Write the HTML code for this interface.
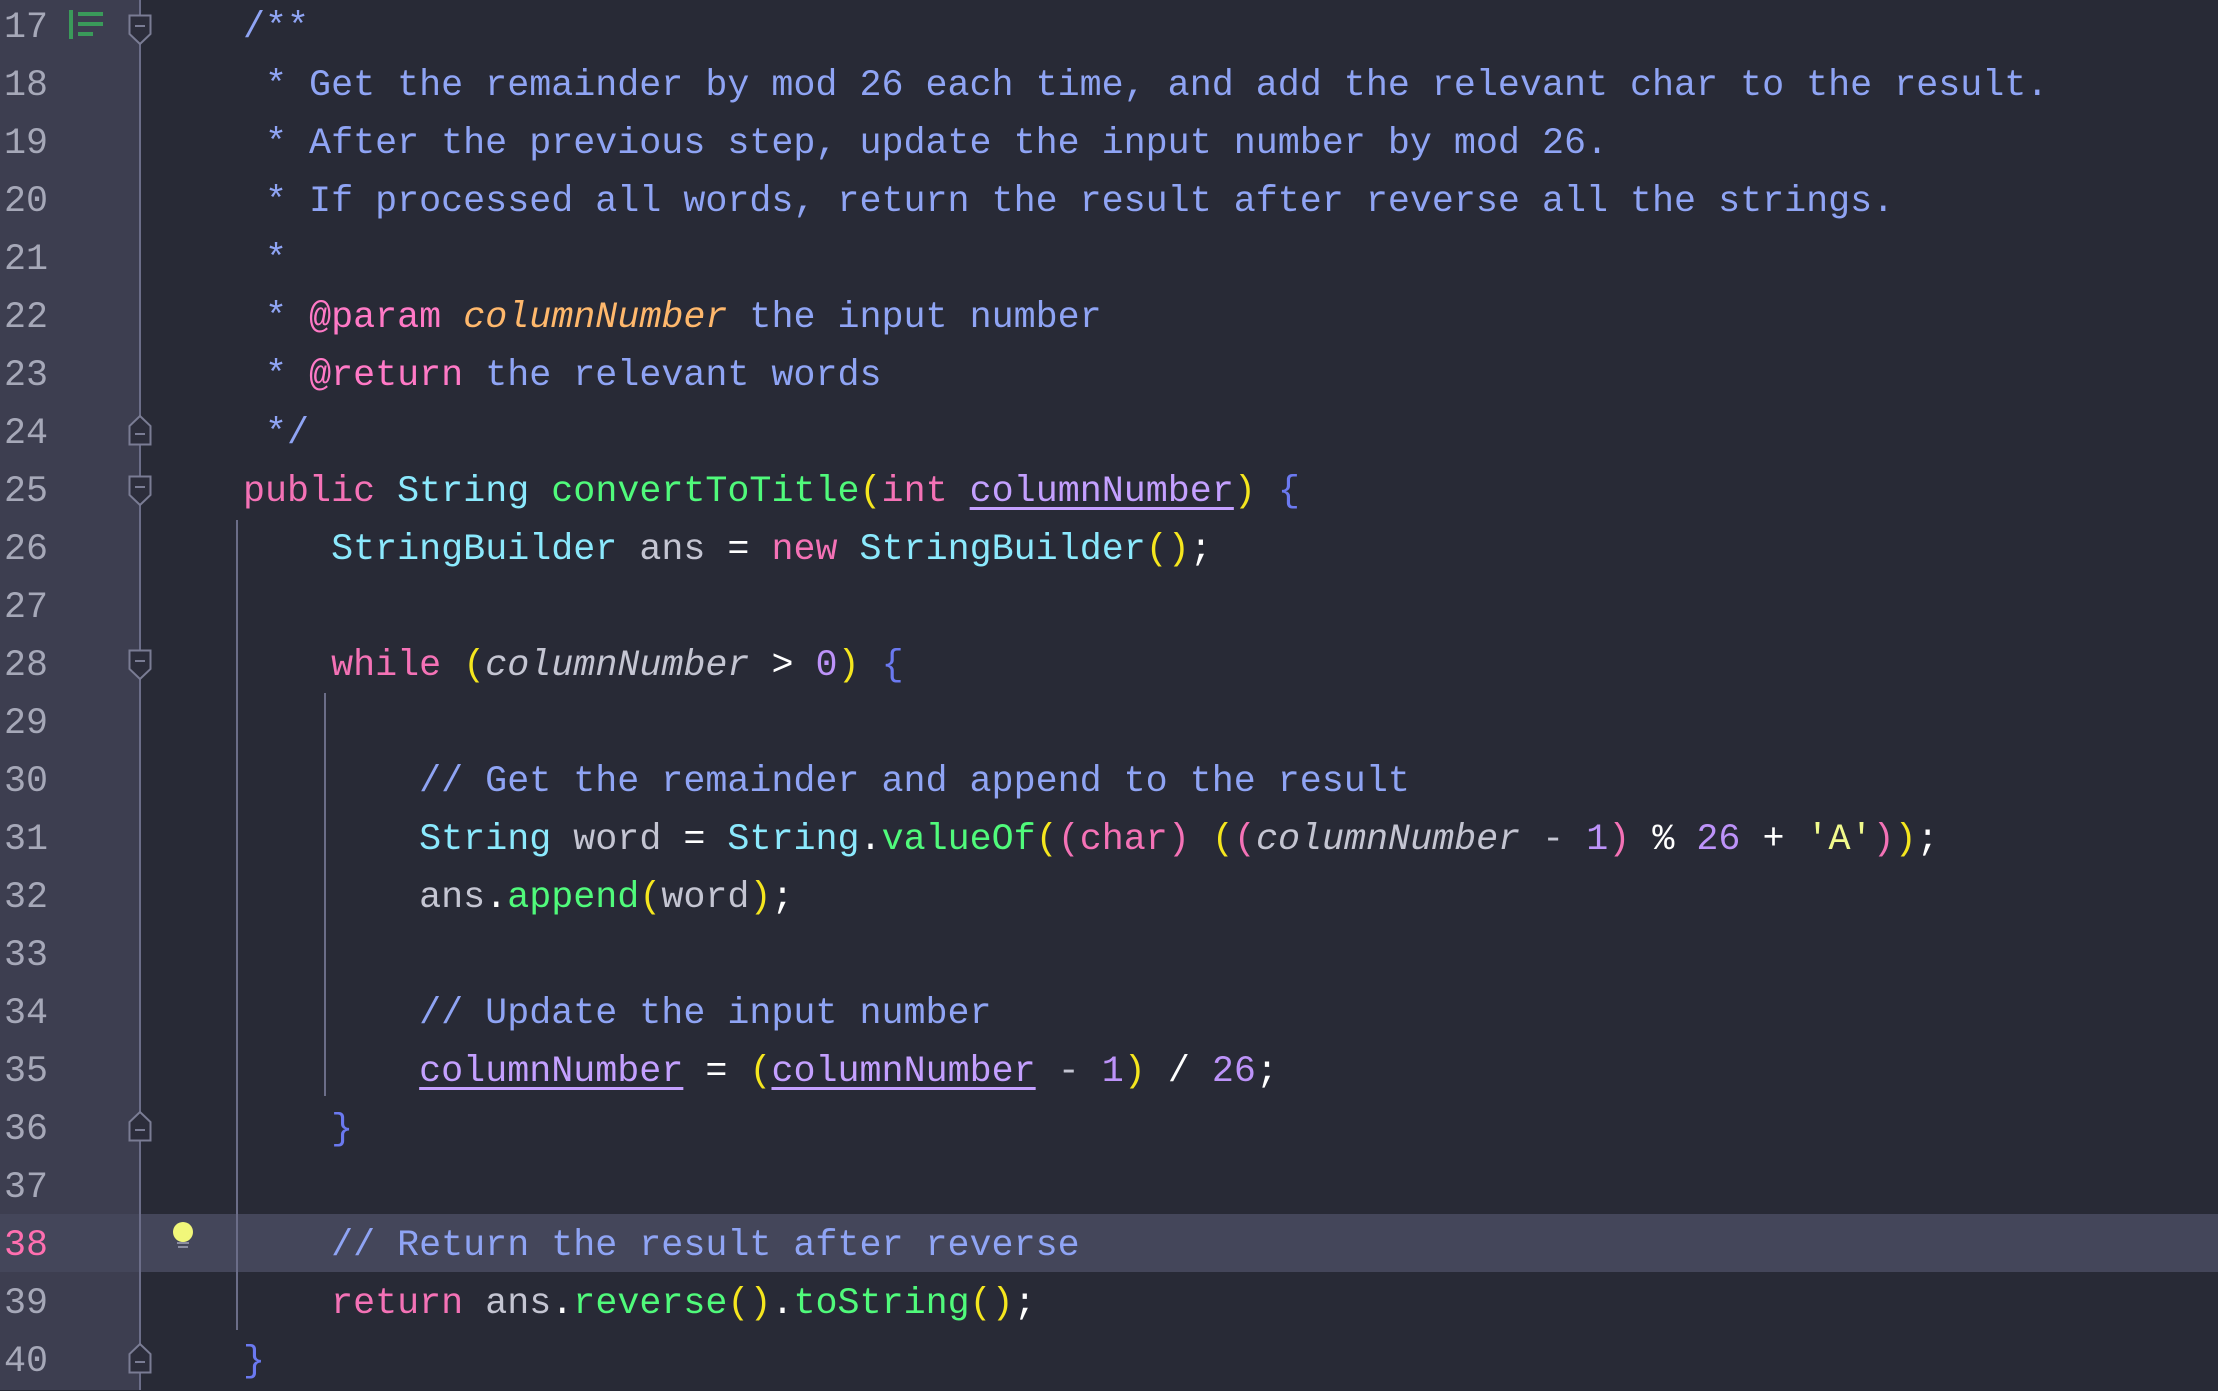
<!DOCTYPE html>
<html><head><meta charset="utf-8"><style>
*{margin:0;padding:0;box-sizing:border-box}
body{width:2218px;height:1390px;background:#282a36;overflow:hidden;position:relative;font-family:"Liberation Mono",monospace;font-size:36.7px}
.gut{position:absolute;left:0;top:0;width:140px;height:1390px;background:#3d3e50}
.gb{position:absolute;left:139px;top:0;width:2px;height:1390px;background:#6b6d88}
.hl{position:absolute;left:0;top:1214px;width:2218px;height:58px;background:#44465a}
.ln{position:absolute;left:4px;height:58px;line-height:58px;color:#a6a8b8;white-space:pre;margin-top:4px}
.c{position:absolute;left:243px;height:58px;line-height:58px;white-space:pre;color:#c4c5d2;margin-top:4px}
.cm{color:#8fa4f4}.k{color:#f472b6}.t{color:#8be9fd}.f{color:#50fa7b}.y{color:#f5e61e}.n{color:#bd93f9}.b{color:#6b79f0}
.v{color:#c4a0ff;text-decoration:underline;text-underline-offset:6px}.i{font-style:italic;color:#c4c5d2}.o{color:#ffffff}
.tag{color:#ff79c6}.p{color:#ffb86c;font-style:italic}
.g{position:absolute;width:2px;background:#6b6d88}
.fold{position:absolute;left:128px}
</style></head><body>
<div class="gut"></div>
<div class="hl"></div>
<div class="gb"></div>
<div class="g" style="left:236px;top:520px;height:810px"></div>
<div class="g" style="left:324px;top:693px;height:403px"></div>

<div class="ln" style="top:-5px">17</div>
<div class="ln" style="top:53px">18</div>
<div class="ln" style="top:111px">19</div>
<div class="ln" style="top:169px">20</div>
<div class="ln" style="top:227px">21</div>
<div class="ln" style="top:285px">22</div>
<div class="ln" style="top:343px">23</div>
<div class="ln" style="top:401px">24</div>
<div class="ln" style="top:459px">25</div>
<div class="ln" style="top:517px">26</div>
<div class="ln" style="top:575px">27</div>
<div class="ln" style="top:633px">28</div>
<div class="ln" style="top:691px">29</div>
<div class="ln" style="top:749px">30</div>
<div class="ln" style="top:807px">31</div>
<div class="ln" style="top:865px">32</div>
<div class="ln" style="top:923px">33</div>
<div class="ln" style="top:981px">34</div>
<div class="ln" style="top:1039px">35</div>
<div class="ln" style="top:1097px">36</div>
<div class="ln" style="top:1155px">37</div>
<div class="ln" style="top:1213px;color:#ff6fb0">38</div>
<div class="ln" style="top:1271px">39</div>
<div class="ln" style="top:1329px">40</div>

<svg style="position:absolute;left:68px;top:9px" width="36" height="32"><rect x="1" y="1" width="4" height="29" fill="#3a9a5a"/><rect x="10" y="3" width="25" height="4" fill="#3a9a5a"/><rect x="10" y="13" width="25" height="4" fill="#3a9a5a"/><rect x="10" y="23" width="15" height="4" fill="#3a9a5a"/></svg>
<svg class="fold" style="top:14px" width="24" height="32"><path d="M1.5 1.5H22.5V20L12 30L1.5 20Z" fill="#2c2d3b" stroke="#7a7c94" stroke-width="2"/><line x1="7" y1="12" x2="17" y2="12" stroke="#7a7c94" stroke-width="2"/></svg>
<svg class="fold" style="top:414px" width="24" height="32"><path d="M1.5 30.5H22.5V12L12 2L1.5 12Z" fill="#2c2d3b" stroke="#7a7c94" stroke-width="2"/><line x1="7" y1="20" x2="17" y2="20" stroke="#7a7c94" stroke-width="2"/></svg>
<svg class="fold" style="top:475px" width="24" height="32"><path d="M1.5 1.5H22.5V20L12 30L1.5 20Z" fill="#2c2d3b" stroke="#7a7c94" stroke-width="2"/><line x1="7" y1="12" x2="17" y2="12" stroke="#7a7c94" stroke-width="2"/></svg>
<svg class="fold" style="top:649px" width="24" height="32"><path d="M1.5 1.5H22.5V20L12 30L1.5 20Z" fill="#2c2d3b" stroke="#7a7c94" stroke-width="2"/><line x1="7" y1="12" x2="17" y2="12" stroke="#7a7c94" stroke-width="2"/></svg>
<svg class="fold" style="top:1110px" width="24" height="32"><path d="M1.5 30.5H22.5V12L12 2L1.5 12Z" fill="#2c2d3b" stroke="#7a7c94" stroke-width="2"/><line x1="7" y1="20" x2="17" y2="20" stroke="#7a7c94" stroke-width="2"/></svg>
<svg class="fold" style="top:1342px" width="24" height="32"><path d="M1.5 30.5H22.5V12L12 2L1.5 12Z" fill="#2c2d3b" stroke="#7a7c94" stroke-width="2"/><line x1="7" y1="20" x2="17" y2="20" stroke="#7a7c94" stroke-width="2"/></svg>
<svg style="position:absolute;left:171px;top:1222px" width="24" height="30"><circle cx="12" cy="10" r="10" fill="#f1f77a"/><rect x="6" y="12" width="12" height="6" fill="#f1f77a"/><rect x="6" y="20" width="12" height="2" fill="#8a8ca0"/><rect x="7" y="24" width="10" height="2" fill="#8a8ca0"/></svg>

<div class="c cm" style="top:-5px">/**</div>
<div class="c cm" style="top:53px"> * Get the remainder by mod 26 each time, and add the relevant char to the result.</div>
<div class="c cm" style="top:111px"> * After the previous step, update the input number by mod 26.</div>
<div class="c cm" style="top:169px"> * If processed all words, return the result after reverse all the strings.</div>
<div class="c cm" style="top:227px"> *</div>
<div class="c cm" style="top:285px"> * <span class="tag">@param</span> <span class="p">columnNumber</span> the input number</div>
<div class="c cm" style="top:343px"> * <span class="tag">@return</span> the relevant words</div>
<div class="c cm" style="top:401px"> */</div>
<div class="c" style="top:459px"><span class="k">public</span> <span class="t">String</span> <span class="f">convertToTitle</span><span class="y">(</span><span class="k">int</span> <span class="v">columnNumber</span><span class="y">)</span> <span class="b">{</span></div>
<div class="c" style="top:517px">    <span class="t">StringBuilder</span> ans <span class="o">=</span> <span class="k">new</span> <span class="t">StringBuilder</span><span class="y">()</span><span class="o">;</span></div>
<div class="c" style="top:633px">    <span class="k">while</span> <span class="y">(</span><span class="i">columnNumber</span> <span class="o">&gt;</span> <span class="n">0</span><span class="y">)</span> <span class="b">{</span></div>
<div class="c cm" style="top:749px">        // Get the remainder and append to the result</div>
<div class="c" style="top:807px">        <span class="t">String</span> word <span class="o">=</span> <span class="t">String</span><span class="o">.</span><span class="f">valueOf</span><span class="y">(</span><span class="k">(</span><span class="k">char</span><span class="k">)</span> <span class="y">(</span><span class="k">(</span><span class="i">columnNumber</span> - <span class="n">1</span><span class="k">)</span> <span class="o">%</span> <span class="n">26</span> <span class="o">+</span> <span style="color:#f1fa8c">'A'</span><span class="k">)</span><span class="y">)</span><span class="o">;</span></div>
<div class="c" style="top:865px">        ans<span class="o">.</span><span class="f">append</span><span class="y">(</span>word<span class="y">)</span><span class="o">;</span></div>
<div class="c cm" style="top:981px">        // Update the input number</div>
<div class="c" style="top:1039px">        <span class="v">columnNumber</span> <span class="o">=</span> <span class="y">(</span><span class="v">columnNumber</span> - <span class="n">1</span><span class="y">)</span> <span class="o">/</span> <span class="n">26</span><span class="o">;</span></div>
<div class="c" style="top:1097px">    <span class="b">}</span></div>
<div class="c cm" style="top:1213px">    // Return the result after reverse</div>
<div class="c" style="top:1271px">    <span class="k">return</span> ans<span class="o">.</span><span class="f">reverse</span><span class="y">()</span><span class="o">.</span><span class="f">toString</span><span class="y">()</span><span class="o">;</span></div>
<div class="c" style="top:1329px"><span class="b">}</span></div>
</body></html>
